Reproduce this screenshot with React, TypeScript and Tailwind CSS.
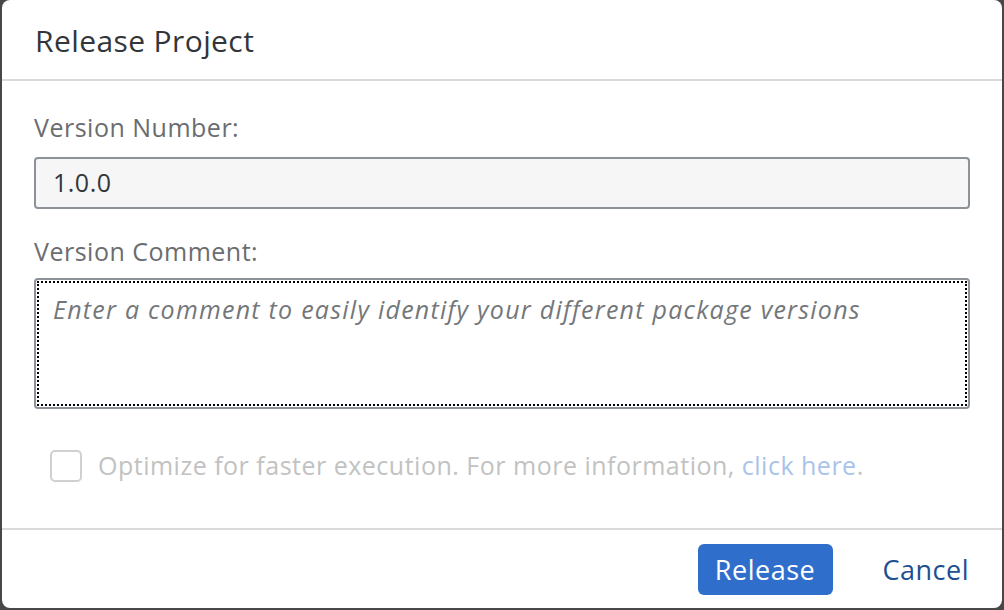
import React from "react";

export default function App() {
  return (
    <div
      className="w-[1004px] h-[610px] bg-[#474747] pl-[2px] pb-[2px] pr-[2px]"
      style={{ fontFamily: '"Open Sans", "Noto Sans", sans-serif' }}
    >
      <div className="w-[1000px] h-[608px] bg-white rounded-[8px] flex flex-col overflow-hidden">
        <div className="h-[81px] shrink-0 border-b-2 border-[#dadada] flex items-center pl-[33px]">
          <h1 className="text-[30px] text-[#32363a] leading-none pt-[2px] tracking-[0.4px]">Release Project</h1>
        </div>
        <div className="flex-1 flex flex-col px-[32px] pt-[30px]">
          <label className="text-[25px] leading-[32px] text-[#6a6d70] tracking-[0.5px]">Version Number:</label>
          <div className="mt-[14px] h-[52px] w-[936px] rounded-[4px] border-2 border-[#8d9299] bg-[#f6f6f6] flex items-center pl-[17px]">
            <span className="text-[25px] text-[#32363a] tracking-[0.5px]">1.0.0</span>
          </div>
          <label className="mt-[26px] text-[25px] leading-[32px] text-[#6a6d70] tracking-[0.5px]">Version Comment:</label>
          <div className="mt-[11px] h-[131px] w-[936px] rounded-[4px] border-2 border-[#8d9299] bg-white p-[1px]">
            <div className="h-full w-full border-2 border-dotted border-black px-[14px] pt-[8px]">
              <span className="text-[25px] italic text-[#74777a] tracking-[1.25px]">
                Enter a comment to easily identify your different package versions
              </span>
            </div>
          </div>
          <div className="mt-[38px] flex items-center pl-[16px]">
            <div className="w-[32px] h-[32px] rounded-[5px] border-2 border-[#d0d0d0] bg-white shrink-0" />
            <span className="ml-[16px] text-[25px] text-[#c2c2c2] whitespace-nowrap tracking-[0.5px]">
              Optimize for faster execution. For more information,{" "}
              <span className="text-[#a9c3ea]">click here</span>.
            </span>
          </div>
        </div>
        <div className="h-[80px] shrink-0 border-t-2 border-[#dadada] flex items-center justify-end pr-[33px]">
          <button className="h-[51px] w-[135px] rounded-[6px] bg-[#2f6fcb] text-white text-[27px] leading-none tracking-[0.5px]">
            Release
          </button>
          <button className="ml-[50px] text-[27px] text-[#1d4f93] leading-none tracking-[0.5px]">Cancel</button>
        </div>
      </div>
    </div>
  );
}
